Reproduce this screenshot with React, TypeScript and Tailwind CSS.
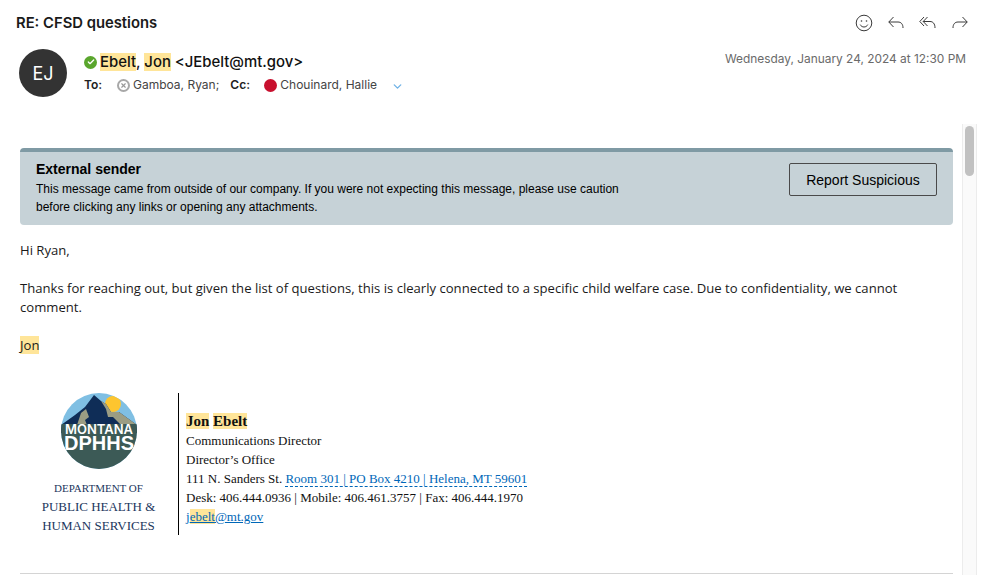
import React from 'react';
import { Check, ChevronDown, X } from 'lucide-react';

const Hl: React.FC<{ children: React.ReactNode }> = ({ children }) => (
  <span className="bg-[#ffe599]">{children}</span>
);

const ActionIcons = () => (
  <div className="-mr-[3px] flex items-center gap-[14px] text-[#3a3a3a]">
    <svg width="18" height="18" viewBox="0 0 18 18" fill="none" stroke="currentColor" strokeWidth="1">
      <circle cx="9" cy="9" r="7.8" />
      <circle cx="6.5" cy="7" r="0.8" fill="currentColor" stroke="none" />
      <circle cx="11.5" cy="7" r="0.8" fill="currentColor" stroke="none" />
      <path d="M5.2 10.6c.8 1.6 2.2 2.4 3.8 2.4s3-.8 3.8-2.4" />
    </svg>
    <svg width="18" height="18" viewBox="0 0 18 18" fill="none" stroke="currentColor" strokeWidth="1">
      <path d="M6.5 3 1.8 8l4.7 5M1.8 8H11c3 0 5 2 5 6" />
    </svg>
    <svg width="18" height="18" viewBox="0 0 18 18" fill="none" stroke="currentColor" strokeWidth="1">
      <path d="M5 3 .8 7.5 5 12M8.5 3 4.2 7.5 8.5 12M4.2 7.5H11c3 0 5 2.2 5 6.5" />
    </svg>
    <svg width="18" height="18" viewBox="0 0 18 18" fill="none" stroke="currentColor" strokeWidth="1">
      <path d="M11.5 3 16.2 8l-4.7 5M16.2 8H7c-3 0-5 2-5 6" />
    </svg>
  </div>
);

const Logo = () => (
  <svg width="76" height="76" viewBox="0 0 76 76" className="shrink-0">
    <defs>
      <clipPath id="disc">
        <circle cx="38" cy="38" r="38" />
      </clipPath>
    </defs>
    <g clipPath="url(#disc)">
      <rect width="76" height="76" fill="#7fbfe3" />
      <circle cx="52" cy="11" r="8" fill="#fdc52f" />
      <path d="M0 32 14 22 24 14 33 2 40 8 45 11 50 19 58 19 76 32V40H0Z" fill="#0f2d57" />
      <path d="M40 8 45 11 50 19 58 19 76 32H60L52 24 47 24 45 16ZM16 32 20 20 25 16 28 24 24 27 26 32Z" fill="#9b9d83" />
      <rect y="31" width="76" height="45" fill="#3c5a56" />
      <text x="38" y="41" textAnchor="middle" fontFamily="Inter, sans-serif" fontWeight="600" fontSize="13" fill="#fff">MONTANA</text>
      <text x="38" y="57" textAnchor="middle" fontFamily="'Liberation Sans', sans-serif" fontWeight="700" fontSize="20" fill="#fff">DPHHS</text>
    </g>
  </svg>
);

export default function App() {
  return (
    <div className="h-[575px] w-[988px] overflow-hidden bg-white text-black font-['Inter',sans-serif]">
      <header className="h-[124px] pl-4 pr-[22px]">
        <div className="flex h-[46px] items-center justify-between">
          <h1 className="text-[14.8px] font-semibold text-[#1a1a1a]">RE: CFSD questions</h1>
          <ActionIcons />
        </div>
        <div className="flex items-start pl-[3px] pt-[3px]">
          <div className="flex h-12 w-12 shrink-0 items-center justify-center rounded-full bg-[#333333] text-[18px] text-white">EJ</div>
          <div className="ml-[17px] flex-1 pt-[4px]">
            <div className="flex items-center text-[14.9px] font-medium leading-[18px] text-[#111111]">
              <span className="mr-[3px] flex h-[13px] w-[13px] items-center justify-center rounded-full bg-[#5aa62d]">
                <Check size={8} strokeWidth={4} className="text-white" />
              </span>
              <span><Hl>Ebelt</Hl>, <Hl>Jon</Hl> &lt;JEbelt@mt.gov&gt;</span>
            </div>
            <div className="mt-[5px] flex items-center text-[12px] leading-[18px] text-[#444444]">
              <span className="w-[33px] font-semibold text-[#222222]">To:</span>
              <span className="mr-[3px] flex h-[13px] w-[13px] items-center justify-center rounded-full border-2 border-[#a8a8a8]">
                <X size={7} strokeWidth={4} className="text-[#999999]" />
              </span>
              <span>Gamboa, Ryan;</span>
              <span className="ml-[11px] w-[34px] font-semibold text-[#222222]">Cc:</span>
              <span className="mr-[3px] h-[13px] w-[13px] rounded-full bg-[#c8102e]" />
              <span>Chouinard, Hallie</span>
              <ChevronDown size={13} strokeWidth={2.5} className="ml-[14px] mt-[2px] text-[#6fb2e6]" />
            </div>
          </div>
          <div className="pt-[1px] text-[11.9px] leading-[18px] text-[#6a6a6a]">Wednesday, January 24, 2024 at 12:30 PM</div>
        </div>
      </header>

      <div className="flex h-[451px]">
        <main className="w-[953px] shrink-0 pl-5 font-['Open_Sans',sans-serif] text-[13.1px] leading-[19px] text-[#1a1a1a]">
          <div className="mt-6 flex h-[77px] w-[933px] items-start justify-between rounded-[4px] border-t-[4px] border-[#7f9aa4] bg-[#c6d2d7] px-4 font-['Liberation_Sans',sans-serif] text-black">
            <div className="pt-[8px]">
              <p className="text-[14px] font-bold leading-[18px]">External sender</p>
              <p className="mt-[2px] text-[12px] leading-[18px]">
                This message came from outside of our company. If you were not expecting this message, please use caution<br />
                before clicking any links or opening any attachments.
              </p>
            </div>
            <button className="mt-[11px] h-[33px] w-[148px] rounded-[2px] border border-[#4a4a4a] pt-[1px] text-[14px] text-black">Report Suspicious</button>
          </div>

          <p className="mt-[16px]">Hi Ryan,</p>
          <p className="mt-[19px] w-[905px]">
            Thanks for reaching out, but given the list of questions, this is clearly connected to a specific child welfare case. Due to confidentiality, we cannot comment.
          </p>
          <p className="mt-[19px]"><Hl>Jon</Hl></p>

          <div className="mt-[38px] flex items-stretch font-['Liberation_Serif',serif]">
            <div className="flex h-[142px] w-[159px] shrink-0 flex-col items-center border-r border-black pr-[1px] text-center text-[#1b365d]">
              <Logo />
              <p className="mt-[11px] text-[11px] leading-[16px]">DEPARTMENT OF</p>
              <p className="mt-[1px] text-[13px] leading-[19px]">PUBLIC HEALTH &amp;</p>
              <p className="text-[13px] leading-[19px]">HUMAN SERVICES</p>
            </div>
            <div className="pl-[7px] pt-[19px] text-[13px] leading-[19px] text-[#111111]">
              <p className="text-[15px] font-bold"><Hl>Jon</Hl> <Hl>Ebelt</Hl></p>
              <p>Communications Director</p>
              <p>Director’s Office</p>
              <p>
                111 N. Sanders St.{' '}
                <span className="border-b border-dashed border-[#0067b8] text-[#0067b8]">Room 301 | PO Box 4210 | Helena, MT 59601</span>
              </p>
              <p>Desk: 406.444.0936 | Mobile: 406.461.3757 | Fax: 406.444.1970</p>
              <p className="text-[#0067b8] underline">j<Hl>ebelt</Hl>@mt.gov</p>
            </div>
          </div>

          <div className="mt-[38px] h-px w-[933px] bg-[#d4d4d4]" />
        </main>

        <div className="ml-[9px] w-[15px] shrink-0 border-x border-[#ececec] bg-[#fafafa] px-[2px] pt-[2px]">
          <div className="h-[50px] rounded-full bg-[#c1c1c1]" />
        </div>
      </div>
    </div>
  );
}
